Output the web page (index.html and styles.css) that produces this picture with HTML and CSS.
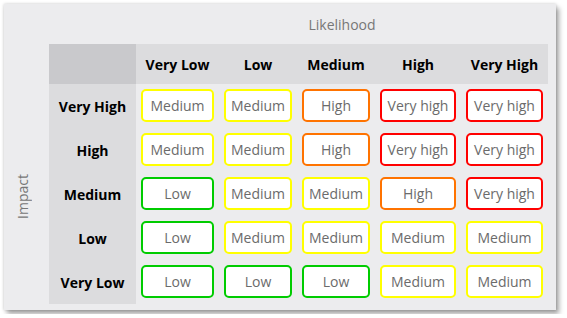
FILE: index.html
```html
<!DOCTYPE html>
<html>
<head>
    <meta charset="utf-8">
    <title>Risk matrix</title>
    <link rel="stylesheet" href="styles.css">
</head>
<body>
    <div class="matrix-card">
        <div class="axis-corner"></div>
        <div class="axis-x">Likelihood</div>
        <div class="axis-y"><span>Impact</span></div>

        <div class="matrix">
            <!-- header row -->
            <div class="corner"></div>
            <div class="col-head">Very Low</div>
            <div class="col-head">Low</div>
            <div class="col-head">Medium</div>
            <div class="col-head">High</div>
            <div class="col-head">Very High</div>

            <div class="row-head">Very High</div>
            <div class="cell"><span class="risk medium">Medium</span></div>
            <div class="cell"><span class="risk medium">Medium</span></div>
            <div class="cell"><span class="risk high">High</span></div>
            <div class="cell"><span class="risk very-high">Very high</span></div>
            <div class="cell"><span class="risk very-high">Very high</span></div>

            <div class="row-head">High</div>
            <div class="cell"><span class="risk medium">Medium</span></div>
            <div class="cell"><span class="risk medium">Medium</span></div>
            <div class="cell"><span class="risk high">High</span></div>
            <div class="cell"><span class="risk very-high">Very high</span></div>
            <div class="cell"><span class="risk very-high">Very high</span></div>

            <div class="row-head">Medium</div>
            <div class="cell"><span class="risk low">Low</span></div>
            <div class="cell"><span class="risk medium">Medium</span></div>
            <div class="cell"><span class="risk medium">Medium</span></div>
            <div class="cell"><span class="risk high">High</span></div>
            <div class="cell"><span class="risk very-high">Very high</span></div>

            <div class="row-head">Low</div>
            <div class="cell"><span class="risk low">Low</span></div>
            <div class="cell"><span class="risk medium">Medium</span></div>
            <div class="cell"><span class="risk medium">Medium</span></div>
            <div class="cell"><span class="risk medium">Medium</span></div>
            <div class="cell"><span class="risk medium">Medium</span></div>

            <div class="row-head">Very Low</div>
            <div class="cell"><span class="risk low">Low</span></div>
            <div class="cell"><span class="risk low">Low</span></div>
            <div class="cell"><span class="risk low">Low</span></div>
            <div class="cell"><span class="risk medium">Medium</span></div>
            <div class="cell"><span class="risk medium">Medium</span></div>
        </div>
    </div>
</body>
</html>
```

FILE: styles.css
```css
body {
    margin: 0;
    padding: 4px;
    background: #fff;
    font-family: "Open Sans", "Liberation Sans", sans-serif;
    font-size: 14px;
}
.matrix-card {
    width: 544px;
    display: grid;
    grid-template-columns: 45px auto;
    grid-template-rows: 40px auto;
    padding: 0 8px 6px 0;
    background: #ececee;
    box-shadow: 0 0 3px rgba(0, 0, 0, 0.2), 3px 4px 5px rgba(0, 0, 0, 0.35);
}
.axis-x {
    display: flex;
    align-items: center;
    justify-content: center;
    padding-left: 87px;
    color: #777;
}
.axis-y {
    display: flex;
    align-items: center;
    justify-content: center;
    padding: 44px 8px 0 0;
    color: #777;
}
.axis-y span {
    writing-mode: vertical-rl;
    transform: rotate(180deg);
}
.matrix {
    display: grid;
    grid-template-columns: 87px 83px 78px 78px 86px 87px;
    grid-template-rows: 40px repeat(5, 44px);
}
.corner {
    background: #c9c9cc;
}
.col-head,
.row-head {
    display: flex;
    align-items: center;
    justify-content: center;
    background: #dcdcde;
    font-weight: bold;
    color: #000;
}
.cell {
    display: flex;
    padding: 5px 5px 6px;
}
.risk {
    flex: 1;
    display: flex;
    align-items: center;
    justify-content: center;
    background: #fff;
    border: 2px solid #ccc;
    border-radius: 5px;
    color: #6b6b6b;
}
.risk.low { border-color: #00cc00; }
.risk.medium { border-color: #ffff00; }
.risk.high { border-color: #ff7300; }
.risk.very-high { border-color: #ff0000; }
```
